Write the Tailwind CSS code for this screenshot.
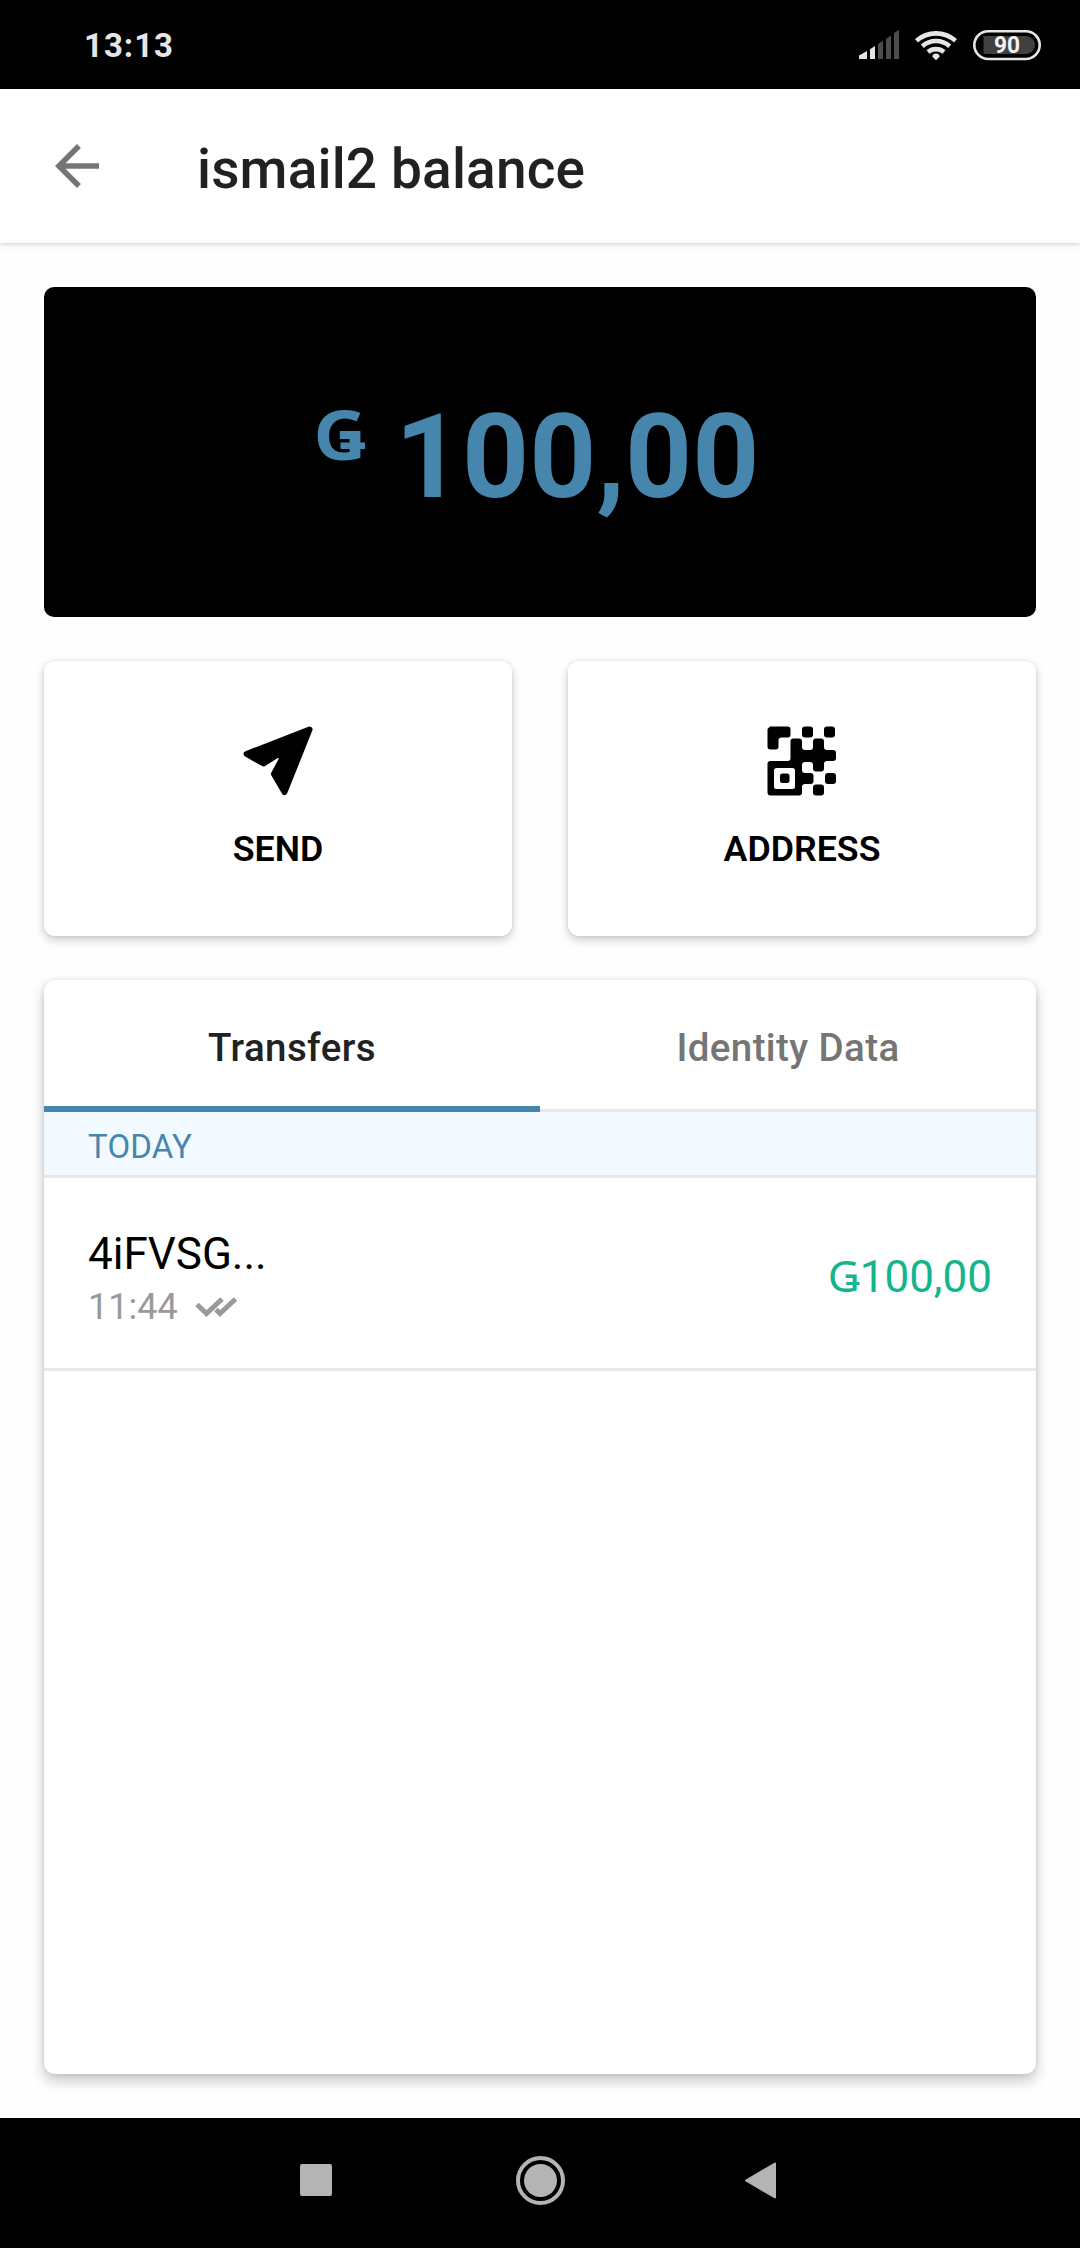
<!DOCTYPE html>
<html lang="en">
<head>
<meta charset="utf-8">
<title>ismail2 balance</title>
<script src="https://cdn.jsdelivr.net/npm/@tailwindcss/browser@4"></script>
</head>
<body class="bg-white">
<div class="w-[1080px] h-[2248px] flex flex-col overflow-hidden bg-[#fefefe] font-['Roboto','Noto_Sans',sans-serif]">
  <!-- Status bar -->
  <div class="h-[89px] shrink-0 bg-black flex items-center justify-between pl-[84px] pr-[39px]">
    <span class="text-[33px] leading-none font-bold text-[#e6e6e6] tracking-[1px] pt-[2px]">13:13</span>
    <div class="flex items-center">
      <svg class="w-[184px] h-[34px]" viewBox="857 27 184 34" fill="none">
        <g fill="#e6e6e6"><path d="M859 54.5L867 50V58H859Z"/><path d="M870 48.300L875 45V58H870Z"/></g>
        <g fill="#4d4d4d"><path d="M878 43L883 39.800V58H878Z"/><path d="M886 38L891 34.500V58H886Z"/><path d="M894 32L899 28.700V58H894Z"/></g>
        <g stroke="#e6e6e6" stroke-width="4.600"><path d="M916.500 39.700A29.500 29.500 0 0 1 955.500 39.700"/><path d="M922.300 45.300A20.500 20.500 0 0 1 949.700 45.300"/><path d="M928 51A12.500 12.500 0 0 1 944 51"/></g>
        <path d="M936 52.500a3.600 3.600 0 0 1 3.600 3.200L936 59.300L932.400 55.700A3.600 3.600 0 0 1 936 52.500Z" fill="#e6e6e6"/>
        <rect x="974.300" y="30.200" width="65.400" height="27.800" rx="13.900" stroke="#e6e6e6" stroke-width="2.600"/>
        <path d="M983.500 35H1026a9 9 0 0 1 0 18H983.500Z" fill="#404040"/>
        <text x="1007" y="52.400" text-anchor="middle" font-size="23.500" font-weight="700" fill="#f2f2f2" textLength="26" lengthAdjust="spacingAndGlyphs">90</text>
      </svg>
    </div>
  </div>
  <!-- App bar -->
  <header class="h-[154px] shrink-0 flex items-center pl-11 bg-white shadow-[0_1px_3px_rgba(0,0,0,0.15),0_3px_8px_rgba(0,0,0,0.06)]">
    <svg class="size-[66px]" viewBox="0 0 24 24" fill="#757575"><path d="M20 11H7.830l5.590-5.590L12 4l-8 8 8 8 1.410-1.410L7.830 13H20v-2z"/></svg>
    <h1 class="ml-[87px] pt-[6px] text-[55px] leading-none font-medium text-[#212121] tracking-[0.15px]">ismail2 balance</h1>
  </header>
  <main class="grow flex flex-col gap-11 px-11 py-11">
    <!-- Balance -->
    <section class="h-[330px] shrink-0 rounded-[10px] bg-black text-[#4686ad] font-bold flex justify-center items-start pt-[112px] pr-1">
      <span class="text-[68px] leading-[70px] font-['Noto_Sans'] mr-[29px] origin-right scale-x-107">Ǥ</span>
      <span class="text-[117px] leading-[117px]">100,00</span>
    </section>
    <!-- Actions -->
    <section class="h-[275px] shrink-0 grid grid-cols-2 gap-14 text-black text-[35.75px] leading-[42px] font-semibold">
      <button class="rounded-[11px] bg-white flex flex-col items-center pt-[65px] gap-[32px] shadow-[0_4px_10px_rgba(0,0,0,0.2),0_0_4px_rgba(0,0,0,0.08)]">
        <svg class="size-[70px]" viewBox="0 0 70 70" stroke="#000" stroke-width="6" stroke-linejoin="round"><path d="M66.500 3.500L3.600 28L20.500 37.500L35.500 28L39.500 32L31 48L41.500 66Z"/></svg>
        <span>SEND</span>
      </button>
      <button class="rounded-[11px] bg-white flex flex-col items-center pt-[65px] gap-[32px] shadow-[0_4px_10px_rgba(0,0,0,0.2),0_0_4px_rgba(0,0,0,0.08)]">
        <svg class="size-[70px]" viewBox="0 0 70 70">
          <path d="M3 .5H20.500a3 3 0 0 1 3 3V8.500a3 3 0 0 1-3 3H14.500a3 3 0 0 0-3 3V20.500a3 3 0 0 1-3 3H3.500a3 3 0 0 1-3-3V3Z"/>
          <rect x="35" y=".5" width="11" height="11" rx="3"/><rect x="57" y=".5" width="11" height="11" rx="3"/>
          <path d="M26.500 12.500H32a3 3 0 0 1 3 3V21a3 3 0 0 0 3 3H43a3 3 0 0 0 3-3V15.500a3 3 0 0 1 3-3H54a3 3 0 0 1 3 3V21a3 3 0 0 0 3 3H66a3 3 0 0 1 3 3V32a3 3 0 0 1-3 3H60a3 3 0 0 0-3 3V42.500a3 3 0 0 1-3 3H49a3 3 0 0 1-3-3V39a3 3 0 0 0-3-3H38a3 3 0 0 0-3 3V44a3 3 0 0 0 3 3H43.500a3 3 0 0 1 3 3V55a3 3 0 0 1-3 3H38a3 3 0 0 0-3 3V66.500a3 3 0 0 1-3 3H3.500a3 3 0 0 1-3-3V38a3 3 0 0 1 3-3H20.500a3 3 0 0 0 3-3V15.500a3 3 0 0 1 3-3Z"/>
          <rect x="7" y="42" width="21" height="21" rx="2.500" fill="#fff"/><rect x="13" y="47.500" width="9.500" height="9.500" rx="2.500"/>
          <rect x="58" y="47" width="11" height="11" rx="3"/><rect x="46" y="58.500" width="11" height="11" rx="3"/>
        </svg>
        <span>ADDRESS</span>
      </button>
    </section>
    <!-- Transfers -->
    <section class="grow rounded-[11px] bg-white flex flex-col shadow-[0_7px_14px_rgba(0,0,0,0.22),0_0_5px_rgba(0,0,0,0.1)]">
      <div class="h-[132px] shrink-0 grid grid-cols-2 text-center text-[38.5px] font-medium tracking-[0.4px]">
        <div class="border-b-6 border-[#4686ad] text-[#212121] pt-[45px] leading-[46px]">Transfers</div>
        <div class="border-b-3 border-[#e8e8ea] text-[#757575] pt-[45px] leading-[46px]">Identity Data</div>
      </div>
      <div class="h-[66px] shrink-0 border-b-3 border-[#e6e8ea] bg-[#f2f9ff] text-[#4686ad] text-[33px] leading-[39px] pl-11 pt-[15px] tracking-[0.2px]">TODAY</div>
      <div class="h-[193px] shrink-0 border-b-3 border-[#e8e8e8] flex items-center justify-between px-11">
        <div class="flex flex-col pt-[15px]">
          <span class="text-[44px] leading-[52px] text-black">4iFVSG...</span>
          <div class="flex items-center gap-[17px] text-[#999]">
            <span class="text-[36px] leading-[54px]">11:44</span>
            <svg class="w-[43px] h-[20px]" viewBox="0 0 43 20" fill="none" stroke="#999" stroke-width="5"><path d="M2 7.500L11.500 16.500L27 2"/><path d="M21 12.500L25 16.500L40.500 2"/></svg>
          </div>
        </div>
        <span class="text-[44px] leading-[52px] text-[#14b48e] pt-2">Ǥ100,00</span>
      </div>
    </section>
  </main>
  <!-- Navigation bar -->
  <nav class="h-[130px] shrink-0 bg-black flex items-start pt-[37px] pl-[300px]">
    <svg class="w-[480px] h-[50px]" viewBox="0 0 480 50" fill="#b4b4b4">
      <rect x="0" y="9" width="32" height="32" rx="2"/>
      <circle cx="240.500" cy="25.500" r="16.500"/><circle cx="240.500" cy="25.500" r="22.500" fill="none" stroke="#b4b4b4" stroke-width="4"/>
      <path d="M446 25.500L475 8.500V42.500Z" stroke="#b4b4b4" stroke-width="2" stroke-linejoin="round"/>
    </svg>
  </nav>
</div>
</body>
</html>
